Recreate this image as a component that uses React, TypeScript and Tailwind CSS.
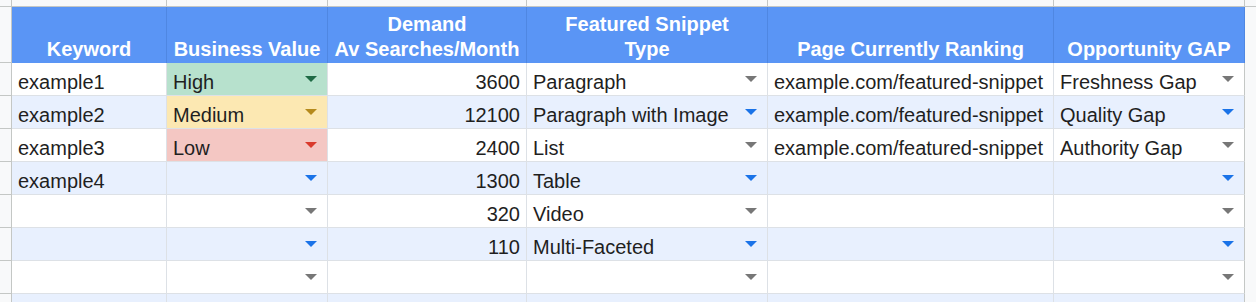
import React from 'react';

type Chip = 'High' | 'Medium' | 'Low' | '';

interface RowData {
  keyword: string;
  value: Chip;
  demand: string;
  snippet: string;
  page: string;
  gap: string;
}

const rows: RowData[] = [
  { keyword: 'example1', value: 'High', demand: '3600', snippet: 'Paragraph', page: 'example.com/featured-snippet', gap: 'Freshness Gap' },
  { keyword: 'example2', value: 'Medium', demand: '12100', snippet: 'Paragraph with Image', page: 'example.com/featured-snippet', gap: 'Quality Gap' },
  { keyword: 'example3', value: 'Low', demand: '2400', snippet: 'List', page: 'example.com/featured-snippet', gap: 'Authority Gap' },
  { keyword: 'example4', value: '', demand: '1300', snippet: 'Table', page: '', gap: '' },
  { keyword: '', value: '', demand: '320', snippet: 'Video', page: '', gap: '' },
  { keyword: '', value: '', demand: '110', snippet: 'Multi-Faceted', page: '', gap: '' },
  { keyword: '', value: '', demand: '', snippet: '', page: '', gap: '' },
  { keyword: '', value: '', demand: '', snippet: '', page: '', gap: '' },
];

const chipStyle: Record<string, { bg: string; arrow: string }> = {
  High: { bg: 'bg-[#b7e1cd]', arrow: '#1f6a45' },
  Medium: { bg: 'bg-[#fce8b2]', arrow: '#b58a1c' },
  Low: { bg: 'bg-[#f4c7c3]', arrow: '#d93a2c' },
};

const Arrow: React.FC<{ color: string }> = ({ color }) => (
  <svg width="12" height="6" viewBox="0 0 12 6" className="shrink-0 mr-[10px]">
    <polygon points="0,0 12,0 6,6" fill={color} />
  </svg>
);

const Cell: React.FC<{
  width: string;
  text?: string;
  right?: boolean;
  arrow?: string;
  className?: string;
}> = ({ width, text = '', right = false, arrow, className = '' }) => (
  <div className={`${width} shrink-0 h-full flex items-center border-r border-b border-[#dde1e6] ${className}`}>
    <span className={`flex-1 self-end pb-[1px] leading-[23px] whitespace-nowrap overflow-hidden ${right ? 'text-right pr-[6px]' : 'pl-[6px]'}`}>
      {text}
    </span>
    {arrow && <Arrow color={arrow} />}
  </div>
);

const widths = ['w-[155px]', 'w-[161px]', 'w-[199px]', 'w-[241px]', 'w-[286px]', 'w-[191px]'];

const headers = [
  ['Keyword'],
  ['Business Value'],
  ['Demand', 'Av Searches/Month'],
  ['Featured Snippet', 'Type'],
  ['Page Currently Ranking'],
  ['Opportunity GAP'],
];

const App: React.FC = () => {
  return (
    <div className="w-[1256px] h-[302px] overflow-hidden bg-[#f8f9fa] font-['Liberation_Sans',Arial,sans-serif] text-[20px] text-[#1f1f1f]">
      {/* column header strip (cut off) */}
      <div className="flex h-[7px] border-b border-[#c4c7c5]">
        <div className="w-[12px] shrink-0 border-r border-[#c4c7c5]" />
        {widths.map((w, i) => (
          <div key={i} className={`${w} shrink-0 border-r border-[#c4c7c5]`} />
        ))}
      </div>

      {/* header row */}
      <div className="flex h-[56px]">
        <div className="w-[12px] shrink-0 border-r border-b border-[#c4c7c5]" />
        {headers.map((lines, i) => (
          <div
            key={i}
            className={`${widths[i]} shrink-0 bg-[#5a95f5] border-r border-[#4f87e2] flex flex-col justify-end items-center pb-[1px] text-white font-bold leading-[25px] whitespace-nowrap`}
          >
            {lines.map((l) => (
              <div key={l}>{l}</div>
            ))}
          </div>
        ))}
        <div className="flex-1 bg-[#f8f9fa]" />
      </div>

      {/* data rows */}
      {rows.map((r, i) => {
        const blue = i % 2 === 1;
        const rowBg = blue ? 'bg-[#e8f0fe]' : 'bg-white';
        const arrow = blue ? '#1a73e8' : '#777777';
        const chip = r.value ? chipStyle[r.value] : null;
        return (
          <div key={i} className="flex h-[33px]">
            <div className="w-[12px] shrink-0 border-r border-b border-[#c4c7c5] bg-[#f8f9fa]" />
            <Cell width={widths[0]} text={r.keyword} className={rowBg} />
            <Cell
              width={widths[1]}
              text={r.value}
              arrow={chip ? chip.arrow : arrow}
              className={chip ? chip.bg : rowBg}
            />
            <Cell width={widths[2]} text={r.demand} right className={rowBg} />
            <Cell width={widths[3]} text={r.snippet} arrow={arrow} className={rowBg} />
            <Cell width={widths[4]} text={r.page} className={rowBg} />
            <Cell width={widths[5]} text={r.gap} arrow={arrow} className={`${rowBg} !border-r-[#c4c7c5]`} />
            <div className="flex-1 bg-[#f8f9fa]" />
          </div>
        );
      })}
    </div>
  );
};

export default App;
